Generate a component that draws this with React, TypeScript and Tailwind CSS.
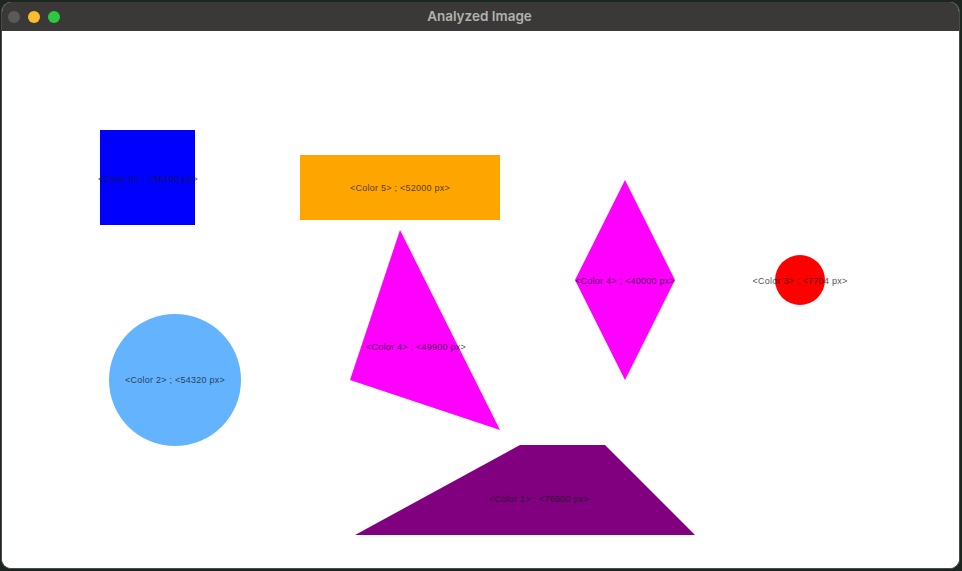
import React from 'react';

type Label = { x: number; y: number; text: string };

const labels: Label[] = [
  { x: 148, y: 182, text: '<Color 6> ; <36100 px>' },
  { x: 400, y: 191, text: '<Color 5> ; <52000 px>' },
  { x: 625, y: 284, text: '<Color 4> ; <40000 px>' },
  { x: 800, y: 284, text: '<Color 3> ; <7704 px>' },
  { x: 416, y: 350, text: '<Color 4> ; <49900 px>' },
  { x: 175, y: 383, text: '<Color 2> ; <54320 px>' },
  { x: 539, y: 502, text: '<Color 1> ; <76500 px>' },
];

const App: React.FC = () => {
  return (
    <div className="w-[962px] h-[571px] bg-[#1e2622] pt-[2px] pl-[1px] overflow-hidden">
      <div className="w-[959px] h-[567px] rounded-[10px] overflow-hidden flex flex-col bg-white border border-[#4a4a4a] border-t-0">
        {/* Title bar */}
        <div className="h-[29px] bg-[#3a3937] flex items-center relative shrink-0">
          <div className="flex items-center gap-[8px] pl-[6px]">
            <span className="w-[12px] h-[12px] rounded-full bg-[#5b5a58]" />
            <span className="w-[12px] h-[12px] rounded-full bg-[#fdbc2f]" />
            <span className="w-[12px] h-[12px] rounded-full bg-[#2ac940]" />
          </div>
          <div
            className="absolute inset-0 flex items-center justify-center text-[13.5px] font-semibold text-[#b3b2b0] pr-[2px]"
            style={{ fontFamily: 'Inter, "Open Sans", sans-serif' }}
          >
            Analyzed Image
          </div>
        </div>

        {/* Image canvas */}
        <div className="flex-1 bg-white">
          <svg width="957" height="538" viewBox="2 31 957 538" className="block">
            <rect x="100" y="130" width="95" height="95" fill="#0000ff" />
            <rect x="300" y="155" width="200" height="65" fill="#ffa500" />
            <polygon points="625,180 675,280 625,380 575,280" fill="#ff00ff" />
            <circle cx="800" cy="280" r="25" fill="#ff0000" />
            <polygon points="400,230 500,430 350,380" fill="#ff00ff" />
            <circle cx="175" cy="380" r="66" fill="#63b3ff" />
            <polygon points="520,445 605,445 695,535 355,535" fill="#800080" />
            {labels.map((l, i) => (
              <text
                key={i}
                x={l.x}
                y={l.y}
                textAnchor="middle"
                fontSize="9"
                fill="#1a1a1a"
                fillOpacity="0.8"
                letterSpacing="0.25"
                style={{ fontFamily: '"Liberation Sans", Arial, sans-serif' }}
              >
                {l.text}
              </text>
            ))}
          </svg>
        </div>
      </div>
    </div>
  );
};

export default App;
